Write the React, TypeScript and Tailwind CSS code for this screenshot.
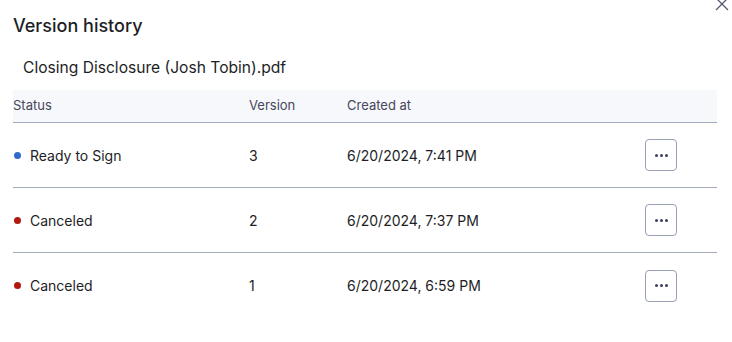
import React from "react";

type Row = { status: "ready" | "canceled"; label: string; version: number; created: string };

const rows: Row[] = [
  { status: "ready", label: "Ready to Sign", version: 3, created: "6/20/2024, 7:41 PM" },
  { status: "canceled", label: "Canceled", version: 2, created: "6/20/2024, 7:37 PM" },
  { status: "canceled", label: "Canceled", version: 1, created: "6/20/2024, 6:59 PM" },
];

export default function App() {
  return (
    <div
      className="relative w-[732px] h-[342px] bg-white text-[#1d1e26] overflow-hidden"
      style={{ fontFamily: "Inter, 'Noto Sans', sans-serif" }}
    >
      <button aria-label="Close" className="absolute right-[2px] top-[-4px] w-[16px] h-[16px] text-[#55586e]">
        <svg viewBox="0 0 16 16" width="16" height="16" fill="none" stroke="currentColor" strokeWidth="1.3">
          <path d="M2 2 L14 14 M14 2 L2 14" />
        </svg>
      </button>

      <div className="pl-[13px] pr-[15px]">
        <h2 className="pt-[14px] text-[18px] leading-[24px] font-medium">Version history</h2>
        <p className="mt-[19px] pl-[10px] text-[15.6px] leading-[22px]">Closing Disclosure (Josh Tobin).pdf</p>

        <div className="mt-[11px]">
          <div className="grid grid-cols-[236px_98px_1fr_72px] items-center h-[33px] bg-[#f7f8fc] border-b border-[#a4aac0] text-[13px] text-[#45475a]">
            <div>Status</div>
            <div>Version</div>
            <div>Created at</div>
            <div />
          </div>

          {rows.map((r, i) => (
            <div
              key={i}
              className={`grid grid-cols-[236px_98px_1fr_72px] items-center h-[65px] text-[14px] ${
                i < rows.length - 1 ? "border-b border-[#a4aac0]" : ""
              }`}
            >
              <div className="flex items-center gap-[9px] pl-[1px]">
                <span
                  className={`w-[7px] h-[7px] rounded-full ${r.status === "ready" ? "bg-[#2f6bcc]" : "bg-[#b3170e]"}`}
                />
                <span>{r.label}</span>
              </div>
              <div>{r.version}</div>
              <div>{r.created}</div>
              <div>
                <button
                  aria-label="More actions"
                  className="w-[32px] h-[32px] rounded-[4px] border border-[#9aa0b8] flex items-center justify-center gap-[2px]"
                >
                  <span className="w-[3px] h-[3px] rounded-full bg-[#3b3e5c]" />
                  <span className="w-[3px] h-[3px] rounded-full bg-[#3b3e5c]" />
                  <span className="w-[3px] h-[3px] rounded-full bg-[#3b3e5c]" />
                </button>
              </div>
            </div>
          ))}
        </div>
      </div>
    </div>
  );
}
